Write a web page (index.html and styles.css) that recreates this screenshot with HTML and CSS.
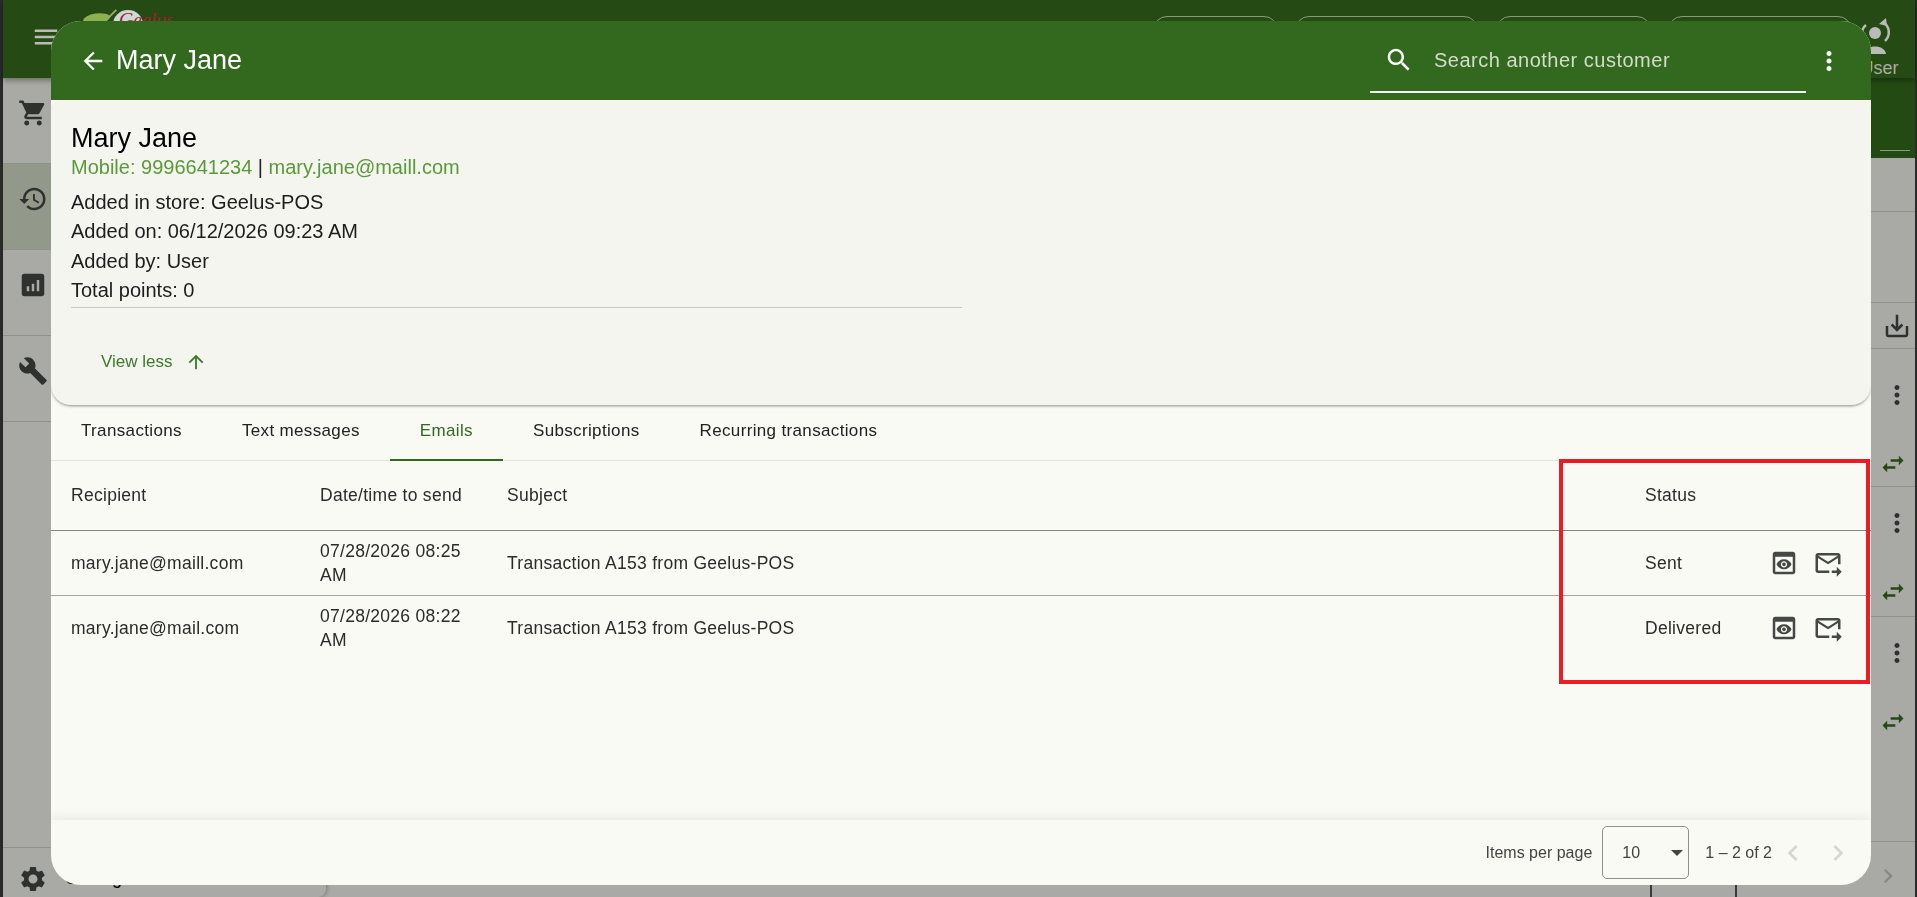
FILE: index.html
```html
<!DOCTYPE html>
<html lang="en">

<head>
    <meta charset="UTF-8">
    <title>Mary Jane</title>
    <link rel="stylesheet" href="styles.css">
</head>

<body>
    <div class="page">
        <header class="topbar">
            <svg class="menu-icon" viewBox="0 0 24 24"><path d="M3 18h18v-2H3v2zm0-5h18v-2H3v2zm0-7v2h18V6H3z"/></svg>
            <svg class="logo" viewBox="0 0 100 40">
                <ellipse cx="15" cy="11" rx="15" ry="6" fill="#8fb04e" transform="rotate(-8 15 11)"/>
                <path d="M28 10 L37 1" stroke="#9aaa6a" stroke-width="2" fill="none"/>
                <circle cx="50" cy="18" r="17" fill="#cfd8d6"/>
                <text x="40" y="19" class="logo-text">Geelus</text>
            </svg>
            <div class="pills">
                <span class="pill pill-a"></span>
                <span class="pill pill-b"></span>
                <span class="pill pill-c"></span>
                <span class="pill pill-d"></span>
            </div>
            <div class="user">
                <svg class="user-icon" viewBox="0 0 32 36">
                    <circle cx="16" cy="15" r="6" fill="#b9bcb6"/>
                    <path d="M7 24 A11 11 0 0 1 7 7 M24 4 A12 12 0 0 1 26 23" stroke="#b9bcb6" stroke-width="2.5" fill="none"/>
                    <path d="M20 6 L27 0 L28 8 Z" fill="#b9bcb6"/>
                    <path d="M6 36 C6 26 26 26 27 36 Z" fill="#b9bcb6"/>
                </svg>
                <span class="user-name">User</span>
            </div>
        </header>

        <div class="workspace">
            <aside class="sidebar">
                <div class="side-item">
                    <svg viewBox="0 0 24 24"><path d="M7 18c-1.1 0-1.99.9-1.99 2S5.9 22 7 22s2-.9 2-2-.9-2-2-2zM1 2v2h2l3.6 7.59-1.35 2.45c-.16.28-.25.61-.25.96 0 1.1.9 2 2 2h12v-2H7.42c-.14 0-.25-.11-.25-.25l.03-.12.9-1.63h7.45c.75 0 1.41-.41 1.75-1.03l3.58-6.49c.08-.14.12-.31.12-.48 0-.55-.45-1-1-1H5.21l-.94-2H1zm16 16c-1.1 0-1.99.9-1.99 2s.89 2 1.99 2 2-.9 2-2-.9-2-2-2z"/></svg>
                </div>
                <div class="side-item selected">
                    <svg viewBox="0 0 24 24"><path d="M13 3c-4.97 0-9 4.03-9 9H1l3.89 3.89.07.14L9 12H6c0-3.87 3.13-7 7-7s7 3.13 7 7-3.13 7-7 7c-1.93 0-3.68-.79-4.94-2.06l-1.42 1.42C8.27 19.99 10.51 21 13 21c4.97 0 9-4.03 9-9s-4.03-9-9-9zm-1 5v5l4.28 2.54.72-1.21-3.5-2.08V8H12z"/></svg>
                </div>
                <div class="side-item">
                    <svg viewBox="0 0 24 24"><path d="M19 3H5c-1.1 0-2 .9-2 2v14c0 1.1.9 2 2 2h14c1.1 0 2-.9 2-2V5c0-1.1-.9-2-2-2zM9 17H7v-4h2v4zm4 0h-2v-6h2v6zm4 0h-2V8h2v9z"/></svg>
                </div>
                <div class="side-item">
                    <svg viewBox="0 0 24 24"><path d="M22.7 19l-9.1-9.1c.9-2.3.4-5-1.5-6.9-2-2-5-2.4-7.4-1.3L9 6 6 9 1.6 4.7C.4 7.1.9 10.1 2.9 12.1c1.9 1.9 4.6 2.4 6.9 1.5l9.1 9.1c.4.4 1 .4 1.4 0l2.3-2.3c.5-.4.5-1.1.1-1.4z"/></svg>
                </div>
                <div class="side-foot">
                    <svg viewBox="0 0 24 24"><path d="M19.14 12.94c.04-.3.06-.61.06-.94 0-.32-.02-.64-.07-.94l2.03-1.58c.18-.14.23-.41.12-.61l-1.92-3.32c-.12-.22-.37-.29-.59-.22l-2.39.96c-.5-.38-1.03-.7-1.62-.94l-.36-2.54c-.04-.24-.24-.41-.48-.41h-3.84c-.24 0-.43.17-.47.41l-.36 2.54c-.59.24-1.13.57-1.62.94l-2.39-.96c-.22-.08-.47 0-.59.22L2.74 8.87c-.12.21-.08.47.12.61l2.03 1.58c-.05.3-.09.63-.09.94s.02.64.07.94l-2.03 1.58c-.18.14-.23.41-.12.61l1.92 3.32c.12.22.37.29.59.22l2.39-.96c.5.38 1.03.7 1.62.94l.36 2.54c.05.24.24.41.48.41h3.84c.24 0 .44-.17.47-.41l.36-2.54c.59-.24 1.13-.56 1.62-.94l2.39.96c.22.08.47 0 .59-.22l1.92-3.32c.12-.22.07-.47-.12-.61l-2.01-1.58zM12 15.6c-1.98 0-3.6-1.62-3.6-3.6s1.62-3.6 3.6-3.6 3.6 1.62 3.6 3.6-1.62 3.6-3.6 3.6z"/></svg>
                    <span>Settings</span>
                </div>
            </aside>

            <main class="content">
                <div class="subnav"><div class="subnav-line"></div></div>
                <div class="row row-a"></div>
                <div class="row row-b"></div>
                <div class="row row-c">
                    <svg class="icon-dark" viewBox="0 0 24 24"><path d="M19 12v7H5v-7H3v7c0 1.1.9 2 2 2h14c1.1 0 2-.9 2-2v-7h-2zm-6 .67l2.59-2.58L17 11.5l-5 5-5-5 1.41-1.41L11 12.67V3h2z"/></svg>
                </div>
                <div class="row row-d">
                    <svg class="icon-dark" viewBox="0 0 24 24"><path d="M12 8c1.1 0 2-.9 2-2s-.9-2-2-2-2 .9-2 2 .9 2 2 2zm0 2c-1.1 0-2 .9-2 2s.9 2 2 2 2-.9 2-2-.9-2-2-2zm0 6c-1.1 0-2 .9-2 2s.9 2 2 2 2-.9 2-2-.9-2-2-2z"/></svg>
                    <svg class="icon-swap" viewBox="0 0 24 24"><path d="M6.99 11L3 15l3.99 4v-3H14v-2H6.99v-3zM21 9l-4-4v3h-7v2h7v3l4-4z"/></svg>
                </div>
                <div class="row row-e">
                    <svg class="icon-dark" viewBox="0 0 24 24"><path d="M12 8c1.1 0 2-.9 2-2s-.9-2-2-2-2 .9-2 2 .9 2 2 2zm0 2c-1.1 0-2 .9-2 2s.9 2 2 2 2-.9 2-2-.9-2-2-2zm0 6c-1.1 0-2 .9-2 2s.9 2 2 2 2-.9 2-2-.9-2-2-2z"/></svg>
                    <svg class="icon-swap" viewBox="0 0 24 24"><path d="M6.99 11L3 15l3.99 4v-3H14v-2H6.99v-3zM21 9l-4-4v3h-7v2h7v3l4-4z"/></svg>
                </div>
                <div class="row row-f">
                    <svg class="icon-dark" viewBox="0 0 24 24"><path d="M12 8c1.1 0 2-.9 2-2s-.9-2-2-2-2 .9-2 2 .9 2 2 2zm0 2c-1.1 0-2 .9-2 2s.9 2 2 2 2-.9 2-2-.9-2-2-2zm0 6c-1.1 0-2 .9-2 2s.9 2 2 2 2-.9 2-2-.9-2-2-2z"/></svg>
                    <svg class="icon-swap" viewBox="0 0 24 24"><path d="M6.99 11L3 15l3.99 4v-3H14v-2H6.99v-3zM21 9l-4-4v3h-7v2h7v3l4-4z"/></svg>
                </div>
                <div class="page-foot">
                    <span class="foot-cell"></span>
                    <svg class="foot-next" viewBox="0 0 24 24"><path d="M10 6L8.59 7.41 13.17 12l-4.58 4.59L10 18l6-6z"/></svg>
                </div>
            </main>
        </div>
    </div>

    <div class="modal">
        <header class="modal-head">
            <svg class="back" viewBox="0 0 24 24"><path d="M20 11H7.83l5.59-5.59L12 4l-8 8 8 8 1.41-1.41L7.83 13H20v-2z"/></svg>
            <h2 class="modal-title">Mary Jane</h2>
            <div class="search">
                <svg viewBox="0 0 24 24"><path d="M15.5 14h-.79l-.28-.27C15.41 12.59 16 11.11 16 9.5 16 5.91 13.09 3 9.5 3S3 5.91 3 9.5 5.91 16 9.5 16c1.61 0 3.09-.59 4.23-1.57l.27.28v.79l5 4.99L20.49 19l-4.99-5zm-6 0C7.01 14 5 11.99 5 9.5S7.01 5 9.5 5 14 7.01 14 9.5 11.99 14 9.5 14z"/></svg>
                <span class="search-text">Search another customer</span>
            </div>
            <svg class="more" viewBox="0 0 24 24"><path d="M12 8c1.1 0 2-.9 2-2s-.9-2-2-2-2 .9-2 2 .9 2 2 2zm0 2c-1.1 0-2 .9-2 2s.9 2 2 2 2-.9 2-2-.9-2-2-2zm0 6c-1.1 0-2 .9-2 2s.9 2 2 2 2-.9 2-2-.9-2-2-2z"/></svg>
        </header>

        <section class="customer">
            <h3 class="customer-name">Mary Jane</h3>
            <p class="contact"><span class="green">Mobile: 9996641234</span> | <span class="green">mary.jane@maill.com</span></p>
            <div class="details">
                <p>Added in store: Geelus-POS</p>
                <p>Added on: 06/12/2026 09:23 AM</p>
                <p>Added by: User</p>
                <p>Total points: 0</p>
            </div>
            <div class="view-less">
                <span>View less</span>
                <svg viewBox="0 0 24 24"><path d="M4 12l1.41 1.41L11 7.83V20h2V7.83l5.58 5.59L20 12l-8-8-8 8z"/></svg>
            </div>
        </section>

        <nav class="tabs">
            <a>Transactions</a>
            <a>Text messages</a>
            <a class="active">Emails</a>
            <a>Subscriptions</a>
            <a>Recurring transactions</a>
        </nav>

        <div class="table-wrap">
            <table class="emails">
                <thead>
                    <tr>
                        <th class="c-to">Recipient</th>
                        <th class="c-date">Date/time to send</th>
                        <th class="c-subject">Subject</th>
                        <th class="c-status">Status</th>
                        <th class="c-actions"></th>
                    </tr>
                </thead>
                <tbody>
                    <tr>
                        <td>mary.jane@maill.com</td>
                        <td>07/28/2026 08:25 AM</td>
                        <td>Transaction A153 from Geelus-POS</td>
                        <td>Sent</td>
                        <td class="actions">
                            <svg viewBox="0 0 24 24"><path d="M19 3H5c-1.11 0-2 .9-2 2v14c0 1.1.89 2 2 2h14c1.1 0 2-.9 2-2V5c0-1.1-.89-2-2-2zm0 16H5V7h14v12zm-5.5-6c0 .83-.67 1.5-1.5 1.5s-1.5-.67-1.5-1.5.67-1.5 1.5-1.5 1.5.67 1.5 1.5zM12 9c-2.73 0-5.06 1.66-6 4 .94 2.34 3.27 4 6 4s5.06-1.66 6-4c-.94-2.34-3.27-4-6-4zm0 6.5c-1.38 0-2.5-1.12-2.5-2.5s1.12-2.5 2.5-2.5 2.5 1.12 2.5 2.5-1.12 2.5-2.5 2.5z"/></svg>
                            <svg viewBox="0 0 24 24"><path d="M20 4H4c-1.1 0-2 .9-2 2v12c0 1.1.9 2 2 2h9v-2H4V8l8 5 8-5v5h2V6c0-1.1-.9-2-2-2zm-8 7L4 6h16l-8 5zm7 4l4 4-4 4v-3h-4v-2h4v-3z"/></svg>
                        </td>
                    </tr>
                    <tr>
                        <td>mary.jane@mail.com</td>
                        <td>07/28/2026 08:22 AM</td>
                        <td>Transaction A153 from Geelus-POS</td>
                        <td>Delivered</td>
                        <td class="actions">
                            <svg viewBox="0 0 24 24"><path d="M19 3H5c-1.11 0-2 .9-2 2v14c0 1.1.89 2 2 2h14c1.1 0 2-.9 2-2V5c0-1.1-.89-2-2-2zm0 16H5V7h14v12zm-5.5-6c0 .83-.67 1.5-1.5 1.5s-1.5-.67-1.5-1.5.67-1.5 1.5-1.5 1.5.67 1.5 1.5zM12 9c-2.73 0-5.06 1.66-6 4 .94 2.34 3.27 4 6 4s5.06-1.66 6-4c-.94-2.34-3.27-4-6-4zm0 6.5c-1.38 0-2.5-1.12-2.5-2.5s1.12-2.5 2.5-2.5 2.5 1.12 2.5 2.5-1.12 2.5-2.5 2.5z"/></svg>
                            <svg viewBox="0 0 24 24"><path d="M20 4H4c-1.1 0-2 .9-2 2v12c0 1.1.9 2 2 2h9v-2H4V8l8 5 8-5v5h2V6c0-1.1-.9-2-2-2zm-8 7L4 6h16l-8 5zm7 4l4 4-4 4v-3h-4v-2h4v-3z"/></svg>
                        </td>
                    </tr>
                </tbody>
            </table>
        </div>

        <footer class="paginator">
            <span class="per-page">Items per page</span>
            <div class="select"><span>10</span><i class="caret"></i></div>
            <span class="range">1 – 2 of 2</span>
            <svg class="chev" viewBox="0 0 24 24"><path d="M15.41 7.41L14 6l-6 6 6 6 1.41-1.41L10.83 12z"/></svg>
            <svg class="chev" viewBox="0 0 24 24"><path d="M10 6L8.59 7.41 13.17 12l-4.58 4.59L10 18l6-6z"/></svg>
        </footer>

        <div class="highlight"></div>
    </div>
</body>

</html>
```

FILE: styles.css
```css
* {
    box-sizing: border-box;
    margin: 0;
    padding: 0;
}

body {
    width: 1917px;
    height: 897px;
    overflow: hidden;
    font-family: "Liberation Sans", Arial, sans-serif;
    background: #a9aaa5;
}

/* page behind the dialog */
.page {
    height: 897px;
    display: flex;
    flex-direction: column;
    border-left: 3px solid #2a2b2a;
    border-right: 2px solid #2a2b2a;
    background: #a9aaa5;
}

.topbar {
    height: 78px;
    flex: none;
    display: flex;
    align-items: flex-start;
    background: #264a14;
    box-shadow: 0 2px 6px rgba(0, 0, 0, .4);
    position: relative;
    z-index: 2;
}

.menu-icon {
    width: 30px;
    height: 30px;
    margin: 22px 0 0 28px;
    fill: #b9bcb6;
}

.logo {
    width: 90px;
    height: 40px;
    margin: 7px 0 0 22px;
}

.logo-text {
    font-family: "Liberation Serif", serif;
    font-style: italic;
    font-size: 22px;
    fill: #a3232b;
}

.pills {
    display: flex;
    margin: 16px 0 0 980px;
}

.pill {
    height: 40px;
    border: 1px solid #8a9a80;
    border-radius: 14px;
}

.pill-a { width: 125px; margin-right: 17px; }
.pill-b { width: 183px; margin-right: 18px; }
.pill-c { width: 155px; margin-right: 17px; }
.pill-d { width: 184px; }

.user {
    display: flex;
    flex-direction: column;
    align-items: center;
    margin: 18px 0 0 2px;
    width: 46px;
}

.user-icon {
    width: 32px;
    height: 36px;
    margin-right: 5px;
}

.user-name {
    color: #a9aca5;
    font-size: 18px;
    line-height: 20px;
    margin: 4px 0 0 5px;
}

.workspace {
    flex: 1;
    display: flex;
    min-height: 0;
}

.sidebar {
    width: 323px;
    flex: none;
    display: flex;
    flex-direction: column;
    border-bottom-right-radius: 8px;
    box-shadow: 1px 0 4px rgba(0, 0, 0, .3);
}

.side-item {
    height: 86px;
    flex: none;
    padding: 0 0 16px 15px;
    display: flex;
    align-items: center;
    border-bottom: 1px solid #8f918b;
}

.side-item svg,
.side-foot svg {
    width: 30px;
    height: 30px;
    fill: #2e312d;
}

.selected {
    background: #92988a;
}

.side-foot {
    margin-top: auto;
    height: 50px;
    padding: 12px 0 0 15px;
    display: flex;
    align-items: center;
    gap: 18px;
    font-size: 18px;
    border-top: 1px solid #8f918b;
}

.content {
    flex: 1;
    display: flex;
    flex-direction: column;
}

.subnav {
    height: 80px;
    flex: none;
    background: #244a14;
    display: flex;
    flex-direction: column;
    justify-content: flex-end;
    align-items: flex-end;
    padding: 0 5px 7px 0;
}

.subnav-line {
    width: 30px;
    height: 1px;
    background: #8a9a80;
}

.row {
    flex: none;
    display: flex;
    flex-direction: column;
    align-items: flex-end;
    padding-right: 3px;
    border-bottom: 1px solid #8f918b;
}

.row-a { height: 54px; }
.row-b { height: 91px; }
.row-c { height: 46px; justify-content: center; }
.row-d { height: 138px; gap: 40px; padding-top: 31px; }
.row-e { height: 130px; gap: 40px; padding-top: 21px; }
.row-f { height: 225px; gap: 40px; padding-top: 21px; }

.icon-dark {
    width: 30px;
    height: 30px;
    fill: #2e312d;
}

.icon-swap {
    width: 28px;
    height: 28px;
    fill: #244a14;
    margin-right: 5px;
}

.page-foot {
    flex: 1;
    display: flex;
    justify-content: flex-end;
    align-items: flex-end;
    padding: 0 13px 7px 0;
}

.foot-cell {
    width: 87px;
    height: 12px;
    margin: 0 137px -7px 0;
    border-left: 2px solid #3a3a3a;
    border-right: 2px solid #3a3a3a;
}

.foot-next {
    width: 28px;
    height: 28px;
    fill: #878983;
}

/* dialog */
.modal {
    position: fixed;
    z-index: 10;
    left: 51px;
    top: 21px;
    width: 1820px;
    height: 864px;
    display: flex;
    flex-direction: column;
    background: #f9faf4;
    border-radius: 30px;
    overflow: hidden;
}

.modal-head {
    height: 79px;
    flex: none;
    display: flex;
    align-items: center;
    padding-left: 28px;
    background: #33691e;
    color: #fff;
}

.back {
    width: 28px;
    height: 28px;
    fill: #fff;
    margin-right: 9px;
}

.modal-title {
    font-size: 27px;
    font-weight: 400;
    flex: 1;
}

.search {
    width: 436px;
    height: 72px;
    align-self: flex-start;
    padding: 8px 0 0 14px;
    display: flex;
    align-items: center;
    gap: 20px;
    border-bottom: 2px solid #f2f3ee;
}

.search svg {
    width: 30px;
    height: 30px;
    fill: #fff;
}

.search-text {
    font-size: 20px;
    letter-spacing: .5px;
    color: #d3dccb;
}

.more {
    width: 30px;
    height: 30px;
    fill: #fff;
    margin: 0 27px 0 8px;
}

.customer {
    height: 305px;
    flex: none;
    padding: 21px 0 0 20px;
    background: #f4f5ef;
    border-radius: 10px 10px 20px 20px;
    box-shadow: 0 2px 3px -1px rgba(0, 0, 0, .45);
    position: relative;
}

.customer-name {
    font-size: 27px;
    font-weight: 400;
    line-height: 34px;
    color: #000;
}

.contact {
    font-size: 20px;
    line-height: 24px;
    color: #222;
}

.green {
    color: #5a9a3a;
}

.details {
    width: 891px;
    margin-top: 9px;
    padding-bottom: 2px;
    border-bottom: 1px solid #c8c9c3;
    font-size: 20px;
    line-height: 29.3px;
    color: #1d1d1d;
}

.view-less {
    display: flex;
    align-items: center;
    gap: 12px;
    margin: 43px 0 0 30px;
    font-size: 17px;
    color: #3b7a2a;
}

.view-less svg {
    width: 22px;
    height: 22px;
    fill: #3b7a2a;
}

.tabs {
    height: 56px;
    flex: none;
    display: flex;
    border-bottom: 1px solid #e2e3dc;
    font-size: 17px;
    letter-spacing: .35px;
    color: #222;
}

.tabs a {
    padding: 0 30px;
    line-height: 52px;
}

.tabs .active {
    color: #33691e;
    border-bottom: 2px solid #33691e;
    height: 56px;
}

.table-wrap {
    flex: 1;
}

.emails {
    width: 1820px;
    border-collapse: collapse;
    table-layout: fixed;
    font-size: 17.5px;
    letter-spacing: .28px;
    color: #2b2b2b;
}

.emails th {
    height: 69px;
    font-weight: 400;
    text-align: left;
    border-bottom: 1px solid #85877f;
}

.emails td {
    height: 65px;
    line-height: 24px;
}

.emails tbody tr:first-child td {
    border-bottom: 1px solid #a3a59e;
}

.c-to { width: 269px; padding-left: 20px; }
.c-date { width: 187px; }
.c-subject { width: 1138px; }
.c-status { width: 122px; }

.emails td:first-child {
    padding-left: 20px;
}

.emails td:nth-child(2) {
    padding-right: 30px;
}

.actions {
    white-space: nowrap;
    padding-left: 2px;
}

.actions svg {
    width: 30px;
    height: 30px;
    fill: #454845;
    vertical-align: middle;
    margin-right: 9px;
}

.paginator {
    height: 65px;
    flex: none;
    display: flex;
    align-items: center;
    justify-content: flex-end;
    padding-right: 17px;
    font-size: 16px;
    color: #444;
    box-shadow: 0 -3px 10px rgba(0, 0, 0, .07);
    position: relative;
}

.per-page {
    margin-right: 10px;
}

.select {
    width: 87px;
    height: 53px;
    padding: 0 0 0 19px;
    display: flex;
    align-items: center;
    justify-content: space-between;
    border: 1px solid #8f918b;
    border-radius: 5px;
    margin-right: 16px;
}

.caret {
    width: 0;
    height: 0;
    margin-right: 5px;
    border-left: 6px solid transparent;
    border-right: 6px solid transparent;
    border-top: 6px solid #444;
}

.range {
    margin-right: -8px;
}

.chev {
    width: 32px;
    height: 32px;
    margin-left: 13px;
    fill: #d5d6d1;
}

.highlight {
    position: absolute;
    left: 1508px;
    top: 438px;
    width: 311px;
    height: 225px;
    border: 4px solid #ed1c24;
    pointer-events: none;
}
```
